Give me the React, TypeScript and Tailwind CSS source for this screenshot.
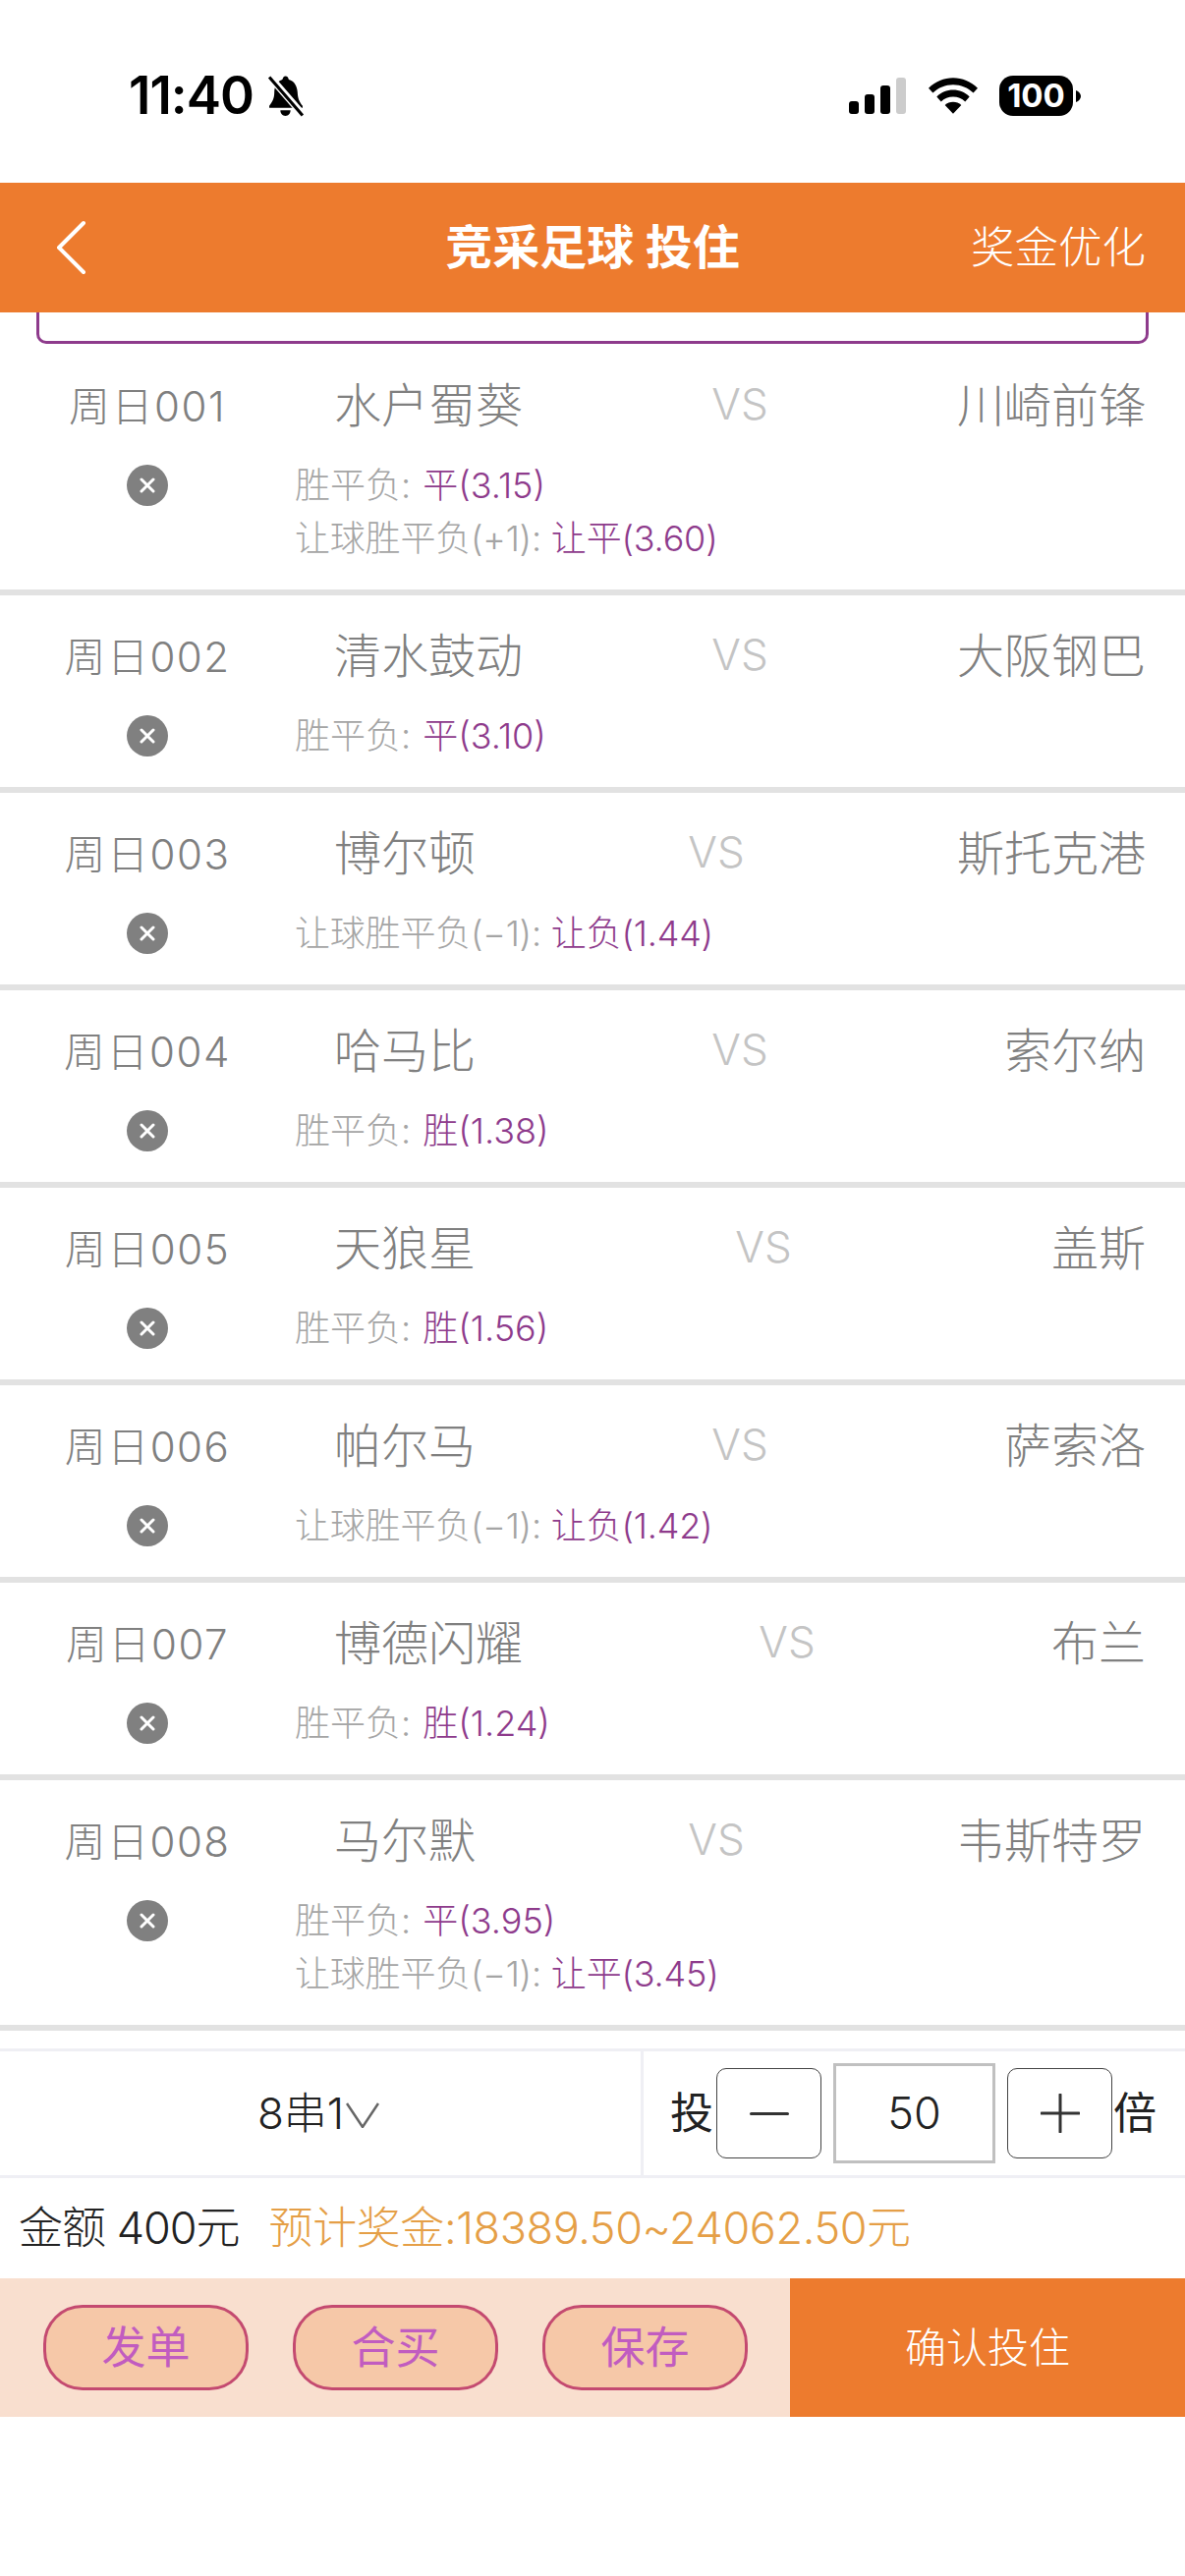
const FONT = "font-[Inter,'Noto_Sans_CJK_SC',sans-serif]";

type Pick = { label: string; value: string };
type Match = { id: string; home: string; away: string; picks: Pick[] };

const matches: Match[] = [
  { id: "周日001", home: "水户蜀葵", away: "川崎前锋", picks: [{ label: "胜平负:", value: "平(3.15)" }, { label: "让球胜平负(+1):", value: "让平(3.60)" }] },
  { id: "周日002", home: "清水鼓动", away: "大阪钢巴", picks: [{ label: "胜平负:", value: "平(3.10)" }] },
  { id: "周日003", home: "博尔顿", away: "斯托克港", picks: [{ label: "让球胜平负(−1):", value: "让负(1.44)" }] },
  { id: "周日004", home: "哈马比", away: "索尔纳", picks: [{ label: "胜平负:", value: "胜(1.38)" }] },
  { id: "周日005", home: "天狼星", away: "盖斯", picks: [{ label: "胜平负:", value: "胜(1.56)" }] },
  { id: "周日006", home: "帕尔马", away: "萨索洛", picks: [{ label: "让球胜平负(−1):", value: "让负(1.42)" }] },
  { id: "周日007", home: "博德闪耀", away: "布兰", picks: [{ label: "胜平负:", value: "胜(1.24)" }] },
  { id: "周日008", home: "马尔默", away: "韦斯特罗", picks: [{ label: "胜平负:", value: "平(3.95)" }, { label: "让球胜平负(−1):", value: "让平(3.45)" }] },
];

function StatusBar() {
  return (
    <div className="h-[186px] flex items-start justify-between pt-[77px] pl-[131px] pr-[106px]">
      <div className="flex items-center gap-[13px] h-[41px]">
        <span className="text-[53px] leading-[41px] font-semibold text-black tracking-[-1px]">11:40</span>
        <svg width="40" height="43" viewBox="0 0 39 41">
          <path d="M19 1c2 0 3 1.500 3.300 3.500C28 6 30.500 11 31 17c.3 6 1.500 9 5 13.500v2H3v-2c3-4 5-7.500 5-13.500 0-6 3-11 8-12.500C16.300 2.500 17.500 1 19 1z" fill="#000" />
          <path d="M14 35h10c0 3-2 5.500-5 5.500S14 38 14 35z" fill="#000" />
          <path d="M3 1l33 38" stroke="#fff" strokeWidth="7" />
          <path d="M3 2l33 38" stroke="#000" strokeWidth="3" />
        </svg>
      </div>
      <div className="flex items-center h-[41px]">
        <svg width="58" height="37" viewBox="0 0 58 37" className="mr-[23px]">
          <rect x="0" y="24" width="10" height="13" rx="3" fill="#000" />
          <rect x="16" y="17" width="10" height="20" rx="3" fill="#000" />
          <rect x="32" y="8" width="10" height="29" rx="3" fill="#000" />
          <rect x="48" y="0" width="10" height="37" rx="3" fill="#ccc" />
        </svg>
        <svg width="50" height="37" viewBox="0 0 51 37" className="mr-[22px]">
          <path d="M25.500 0C35 0 44 3.800 51 10.500l-4.500 5C40.800 10 33.500 7 25.500 7S10.200 10 4.500 15.500L0 10.500C7 3.800 16 0 25.500 0z" fill="#000" />
          <path d="M25.500 12.500c6.500 0 12.500 2.500 17 7l-4.500 5c-3.300-3.200-7.800-5-12.500-5s-9.200 1.800-12.500 5l-4.500-5c4.500-4.500 10.500-7 17-7z" fill="#000" />
          <path d="M25.500 25c3.200 0 6.200 1.200 8.500 3.300L25.500 37 17 28.300c2.300-2.100 5.300-3.300 8.500-3.300z" fill="#000" />
        </svg>
        <div className="w-[75px] h-[41px] rounded-[14px] bg-black text-white flex items-center justify-center text-[33px] font-bold">100</div>
        <svg width="5" height="12" viewBox="0 0 5 12" className="ml-[3px]"><path d="M0 0c3 1 5 3.500 5 6s-2 5-5 6z" fill="#000" /></svg>
      </div>
    </div>
  );
}

function Header() {
  return (
    <div className="h-[132px] bg-[#ed7b2e] flex items-center text-white">
      <div className="w-[300px] pl-[56px] flex items-center">
        <svg width="32" height="56" viewBox="0 0 32 56" fill="none">
          <path d="M29 3L4 28l25 25" stroke="#fff" strokeWidth="4" strokeLinecap="round" strokeLinejoin="round" />
        </svg>
      </div>
      <div className="flex-1 text-center text-[48px] font-bold">竞采足球 投住</div>
      <div className="w-[300px] flex justify-end pr-[40px] text-[44.500px] font-light">奖金优化</div>
    </div>
  );
}

function Row({ m }: { m: Match }) {
  const long = (p: Pick) => p.label.length > 6;
  return (
    <div className="flex border-b-[6px] border-[#e2e2e2] pt-[27px] pb-[25px]">
      <div className="w-[300px] shrink-0 flex flex-col items-center">
        <div className="h-[70px] flex items-center text-[42px] font-light text-[#808080] tracking-[1.5px]">{m.id}</div>
        <div className="mt-[19px] h-[54px] flex items-center">
          <div className="w-[42px] h-[42px] rounded-full bg-[#808080] flex items-center justify-center">
            <svg width="16" height="16" viewBox="0 0 16 16"><path d="M2 2l12 12M14 2L2 14" stroke="#fff" strokeWidth="3" strokeLinecap="round" /></svg>
          </div>
        </div>
      </div>
      <div className="flex-1 pr-[40px]">
        <div className="h-[70px] pl-[40px] flex items-center justify-between">
          <span className="text-[48px] font-light text-[#808080]">{m.home}</span>
          <span className="text-[44px] font-light text-[#c4c4c4] -mt-[4px]">VS</span>
          <span className="text-[48px] font-light text-[#808080]">{m.away}</span>
        </div>
        <div className="mt-[19px]">
          {m.picks.map((p) => (
            <div key={p.label} className="h-[54px] flex items-center text-[36px] font-light whitespace-pre">
              <span className={long(p) ? "text-[#a5a5a5] tracking-[-0.2px]" : "text-[#a5a5a5] mr-[2px]"}>{p.label} </span>
              <span className={long(p) ? "text-[#8e3b8c] tracking-[-0.2px]" : "text-[#8e3b8c]"}>{p.value}</span>
            </div>
          ))}
        </div>
      </div>
    </div>
  );
}

function Stepper() {
  return (
    <div className="flex-1 flex items-center pl-[27px] text-[44px] text-[#222]">
      <span className="w-[47px]">投</span>
      <div className="w-[107px] h-[92px] border border-[#444] rounded-[10px] flex items-center justify-center">
        <div className="w-[40px] h-[3px] rounded-full bg-[#333]" />
      </div>
      <div className="w-[165px] h-[102px] ml-[12px] border-[3px] border-[#c0c0c0] flex items-center justify-center text-[45px] font-light">50</div>
      <div className="w-[107px] h-[92px] ml-[12px] border border-[#444] rounded-[10px] flex items-center justify-center">
        <svg width="40" height="40" viewBox="0 0 40 40"><path d="M1 20h38M20 1v38" stroke="#333" strokeWidth="3" strokeLinecap="round" /></svg>
      </div>
      <span className="ml-[1px]">倍</span>
    </div>
  );
}

function Pill({ text }: { text: string }) {
  return (
    <div className="w-[209px] h-[87px] rounded-[40px] border-[3px] border-[#c44a70] bg-[#f6c8a8] flex items-center justify-center text-[45px] text-[#c15cc0]">
      {text}
    </div>
  );
}

export default function App() {
  return (
    <div className={`${FONT} w-[1206px] h-[2622px] bg-white overflow-hidden`}>
      <StatusBar />
      <Header />
      <div className="h-[32px] mx-[37px] mb-[1px] border-[3px] border-t-0 border-[#8e3b8c] rounded-b-[10px]" />
      {matches.map((m) => (
        <Row key={m.id} m={m} />
      ))}
      <div className="mt-[18px] h-[132px] flex border-y-[3px] border-[#efeff4]">
        <div className="w-[655px] border-r-[3px] border-[#efeff4] flex items-center justify-center text-[44px] font-light text-[#222] pr-[4px]">
          <span>8串1</span>
          <svg width="34" height="26" viewBox="0 0 34 26" className="ml-[2px] mt-[4px]"><path d="M1 1l16 24L33 1" fill="none" stroke="#666" strokeWidth="2.500" /></svg>
        </div>
        <Stepper />
      </div>
      <div className="h-[102px] flex items-center pl-[19px] text-[45px] font-light whitespace-pre">
        <span className="text-[#222] tracking-[-1px]">金额 400元</span>
        <span className="ml-[30px] text-[#e59f47] tracking-[-0.4px]">预计奖金:18389.50~24062.50元</span>
      </div>
      <div className="h-[141px] flex">
        <div className="w-[804px] bg-[#f9dfcf] flex items-center pl-[44px] gap-[45px]">
          <Pill text="发单" />
          <Pill text="合买" />
          <Pill text="保存" />
        </div>
        <div className="flex-1 bg-[#ed7b2e] flex items-center justify-center text-white text-[42px] font-light">确认投住</div>
      </div>
    </div>
  );
}
